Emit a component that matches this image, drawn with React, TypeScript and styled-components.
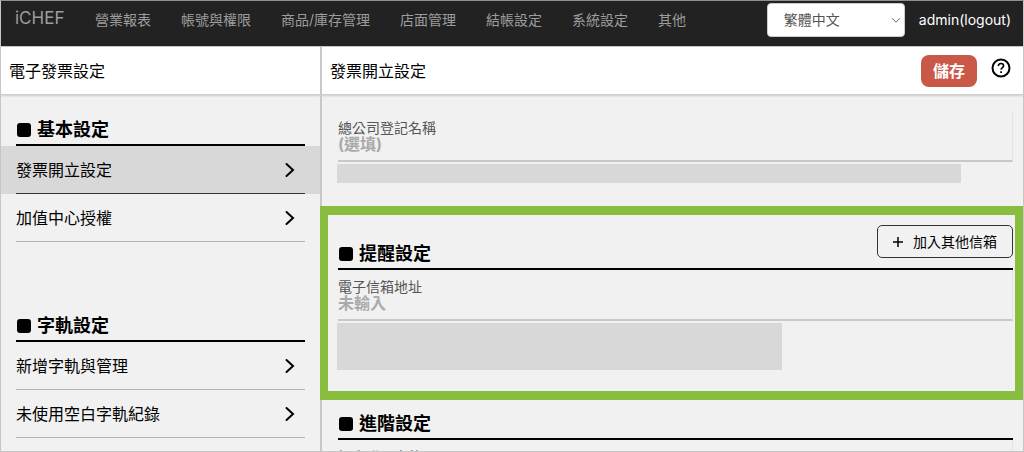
import React, { useId } from "react";
import styled, { createGlobalStyle } from "styled-components";

const GlobalStyle = createGlobalStyle`
  * { box-sizing: border-box; }
  body {
    margin: 0;
    background: #f1f1f1;
    color: #000;
    font-family: Inter, "Noto Sans CJK TC", sans-serif;
    font-size: 16px;
    line-height: 24px;
  }
  button, input, select { font: inherit; color: inherit; }
  a { color: inherit; text-decoration: none; }
  h1, h2, ul { margin: 0; padding: 0; font-weight: 400; }
  ul { list-style: none; }
`;

const Shell = styled.div`
  display: flex;
  flex-direction: column;
  height: 100vh;
  border: 1px solid #c6c6c6;
  border-top-color: #8f8f8f;
  overflow: hidden;
`;

const TopBar = styled.header`
  display: flex;
  flex: none;
  align-items: flex-start;
  height: 46px;
  padding: 2px 12px 0 14px;
  background: #222;
  border-bottom: 1px solid #c6c6c6;
`;

const Brand = styled.a`
  width: 80px;
  color: #9d9d9d;
  font-size: 17px;
  line-height: 30px;
`;

const Nav = styled.nav`
  display: flex;
  flex: 1;
  gap: 30px;
  color: #9d9d9d;
  font-size: 14px;
  line-height: 34px;
  white-space: nowrap;
`;

const LanguageField = styled.div`
  position: relative;
  margin-right: 14px;
`;

const LanguageSelect = styled.select`
  display: block;
  appearance: none;
  width: 138px;
  height: 34px;
  padding: 0 16px;
  border: 1px solid #ccc;
  border-radius: 4px;
  background: #fff;
  color: #555;
  font-size: 14px;
`;

const SelectArrow = styled.svg`
  position: absolute;
  right: 4px;
  top: 14px;
  pointer-events: none;
`;

const Logout = styled.a`
  color: #fff;
  font-size: 14px;
  line-height: 34px;
`;

const Columns = styled.div`
  display: grid;
  grid-template-columns: 319px minmax(0, 1fr);
  flex: 1;
  min-height: 0;
`;

const Column = styled.div`
  display: flex;
  flex-direction: column;
  min-height: 0;
  min-width: 0;
`;

const TitleBar = styled.div<{ $divided?: boolean }>`
  position: relative;
  display: flex;
  flex: none;
  align-items: center;
  height: 47px;
  padding: 0 12px 0 8px;
  border-left: ${(p) => (p.$divided ? "2px solid #c8c8c8" : "none")};
  background: #fff;
  box-shadow: 0 1px 2px 1px #ccc;
  clip-path: inset(0 0 -4px 0);
`;

const Title = styled.h1`
  flex: 1;
  font-size: 16px;
`;

const SaveButton = styled.button`
  width: 56px;
  height: 32px;
  margin-right: 14px;
  padding: 0;
  border: 0;
  border-radius: 8px;
  background: #c95848;
  color: #fff;
  font-weight: 700;
`;

const HelpButton = styled.button`
  display: flex;
  padding: 0 0 6px;
  border: 0;
  background: none;
`;

const Scroller = styled.div<{ $divided?: boolean }>`
  flex: 1;
  min-height: 0;
  overflow-y: auto;
  scrollbar-width: none;
  box-shadow: ${(p) => (p.$divided ? "inset 2px 0 #c8c8c8" : "none")};
`;

const MenuGroup = styled.section`
  padding-top: 21px;
  margin-bottom: 48px;
`;

const SectionHead = styled.div<{ $inset?: boolean }>`
  display: flex;
  align-items: center;
  gap: 6px;
  margin: ${(p) => (p.$inset ? "0 15px" : "0")};
  padding: 0 1px;
  height: 31px;
  border-bottom: 2px solid #000;
`;

const Marker = styled.span`
  width: 14px;
  height: 14px;
  border-radius: 3px;
  background: #000;
`;

const Heading = styled.h2`
  flex: 1;
  font-size: 18px;
  font-weight: 700;
`;

const MenuItem = styled.li<{ $active?: boolean }>`
  padding: 0 15px;
  background: ${(p) => (p.$active ? "#d8d8d8" : "transparent")};

  a {
    display: flex;
    align-items: center;
    justify-content: space-between;
    height: 48px;
    padding-right: 9px;
    border-bottom: 1px solid ${(p) => (p.$active ? "#333" : "#b5b5b5")};
  }
`;

const FieldBlock = styled.div`
  display: flex;
  flex-direction: column;
  height: 51px;
  padding-top: 8px;
  border-right: 1px solid #e4e4e4;
  border-bottom: 2px solid #c8c8c8;

  label {
    color: #555;
    font-size: 14px;
    line-height: 17px;
  }

  input {
    width: 100%;
    height: 17px;
    padding: 0;
    border: 0;
    background: none;
    font-weight: 700;
    line-height: 17px;
  }

  input::placeholder { color: #aaa; opacity: 1; }
`;

const Panel = styled.section`
  padding: 0 10px 0 18px;
`;

const CompanyPanel = styled(Panel)`
  padding-top: 17px;
  padding-bottom: 23px;
`;

const HighlightPanel = styled.section`
  padding: 10px 2px 21px 10px;
  border: 9px solid #88bd40;
  border-width: 9px 8px;
`;

const AdvancedPanel = styled(Panel)`
  padding-top: 9px;
`;

const NotePlaceholder = styled.div<{ $width: number; $height: number }>`
  width: ${(p) => p.$width}px;
  max-width: 100%;
  height: ${(p) => p.$height}px;
  margin: 2px 0 0 -1px;
  background: #d8d8d8;
`;

const HeadWithAction = styled(SectionHead)`
  height: 45px;
  align-items: flex-end;
  padding-bottom: 2px;

  ${Marker} { margin-bottom: 5px; }
`;

const AddButton = styled.button`
  display: flex;
  align-items: center;
  align-self: flex-start;
  gap: 9px;
  height: 33px;
  margin-right: -1px;
  padding: 0 15px 0 14px;
  border: 1px solid #333;
  border-radius: 5px;
  background: none;
  font-size: 14px;
`;

const Chevron = () => (
  <svg width="12" height="16" viewBox="0 0 12 16" fill="none" stroke="#000" strokeWidth="2" aria-hidden="true">
    <path d="M2.5 2 9 8 2.5 14" strokeLinecap="round" />
  </svg>
);

const Field = ({ label, placeholder }: { label: string; placeholder?: string }) => {
  const id = useId();
  return (
    <FieldBlock>
      <label htmlFor={id}>{label}</label>
      <input id={id} placeholder={placeholder} />
    </FieldBlock>
  );
};

const navItems = ["營業報表", "帳號與權限", "商品/庫存管理", "店面管理", "結帳設定", "系統設定", "其他"];

const menu = [
  { title: "基本設定", items: ["發票開立設定", "加值中心授權"] },
  { title: "字軌設定", items: ["新增字軌與管理", "未使用空白字軌紀錄"] },
];

export default function App() {
  return (
    <Shell>
      <GlobalStyle />
      <TopBar>
        <Brand href="#">iCHEF</Brand>
        <Nav>
          {navItems.map((item) => (
            <a href="#" key={item}>{item}</a>
          ))}
        </Nav>
        <LanguageField>
          <LanguageSelect aria-label="語言">
            <option>繁體中文</option>
          </LanguageSelect>
          <SelectArrow width="10" height="7" viewBox="0 0 10 7" fill="none" stroke="#666" aria-hidden="true">
            <path d="M1 1.2 5 5.2 9 1.2" />
          </SelectArrow>
        </LanguageField>
        <Logout href="#">admin(logout)</Logout>
      </TopBar>
      <Columns>
        <Column as="aside">
          <TitleBar>
            <Title>電子發票設定</Title>
          </TitleBar>
          <Scroller>
            {menu.map((group) => (
              <MenuGroup key={group.title}>
                <SectionHead $inset>
                  <Marker />
                  <Heading>{group.title}</Heading>
                </SectionHead>
                <ul>
                  {group.items.map((item) => (
                    <MenuItem key={item} $active={item === "發票開立設定"}>
                      <a href="#">
                        {item}
                        <Chevron />
                      </a>
                    </MenuItem>
                  ))}
                </ul>
              </MenuGroup>
            ))}
          </Scroller>
        </Column>
        <Column as="main">
          <TitleBar $divided>
            <Title>發票開立設定</Title>
            <SaveButton>儲存</SaveButton>
            <HelpButton aria-label="說明">
              <svg width="20" height="20" viewBox="0 0 20 20" fill="none" stroke="#000" strokeWidth="2">
                <circle cx="10" cy="10" r="8.5" />
                <path d="M7.4 8c0-1.6 1.1-2.5 2.6-2.5s2.6 1 2.6 2.3c0 1.7-2.5 2-2.5 4" strokeWidth="1.6" />
                <path d="M9.2 13.3h1.7V15H9.2z" fill="#000" stroke="none" />
              </svg>
            </HelpButton>
          </TitleBar>
          <Scroller $divided>
            <CompanyPanel>
              <Field label="總公司登記名稱" placeholder="(選填)" />
              <NotePlaceholder $width={624} $height={19} />
            </CompanyPanel>
            <HighlightPanel>
              <HeadWithAction>
                <Marker />
                <Heading>提醒設定</Heading>
                <AddButton>
                  <svg width="12" height="12" viewBox="0 0 12 12" stroke="#000" strokeWidth="1.5" aria-hidden="true">
                    <path d="M6 1v10M1 6h10" />
                  </svg>
                  加入其他信箱
                </AddButton>
              </HeadWithAction>
              <Field label="電子信箱地址" placeholder="未輸入" />
              <NotePlaceholder $width={445} $height={47} />
            </HighlightPanel>
            <AdvancedPanel>
              <SectionHead>
                <Marker />
                <Heading>進階設定</Heading>
              </SectionHead>
              <Field label="設定發票字軌" />
            </AdvancedPanel>
          </Scroller>
        </Column>
      </Columns>
    </Shell>
  );
}
